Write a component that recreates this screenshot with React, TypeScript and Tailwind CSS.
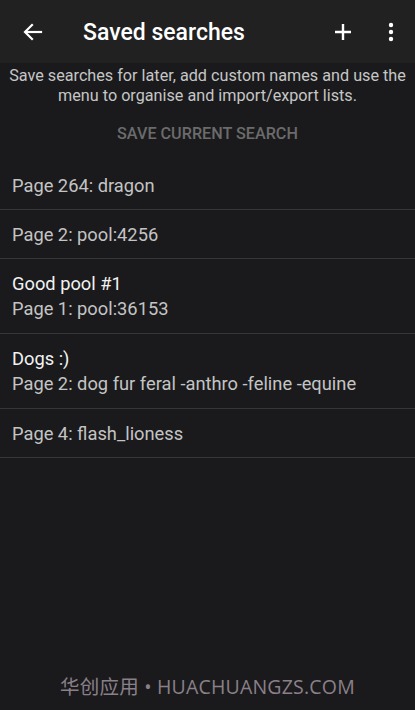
import React from "react";

type Search = {
  name?: string;
  query: string;
};

const searches: Search[] = [
  { query: "Page 264: dragon" },
  { query: "Page 2: pool:4256" },
  { name: "Good pool #1", query: "Page 1: pool:36153" },
  { name: "Dogs :)", query: "Page 2: dog fur feral -anthro -feline -equine" },
  { query: "Page 4: flash_lioness" },
];

const App: React.FC = () => {
  return (
    <div
      className="w-[415px] h-[710px] bg-[#1a1a1c] flex flex-col overflow-hidden"
      style={{ fontFamily: "Roboto, 'Noto Sans CJK SC', sans-serif" }}
    >
      {/* Toolbar */}
      <div className="h-[63px] bg-[#212121] flex items-center shrink-0">
        <button className="w-[66px] h-full flex items-center justify-center text-white">
          <svg width="24" height="24" viewBox="0 0 24 24" fill="none" stroke="currentColor" strokeWidth="2.2" strokeLinecap="square">
            <path d="M20 12H5" />
            <path d="M11 5l-7 7 7 7" />
          </svg>
        </button>
        <h1 className="flex-1 pl-[17px] pt-[3px] text-[23px] font-medium text-white">Saved searches</h1>
        <button className="w-[48px] h-full flex items-center justify-center text-white">
          <svg width="24" height="24" viewBox="0 0 24 24" fill="none" stroke="currentColor" strokeWidth="2.4">
            <path d="M12 4v16M4 12h16" />
          </svg>
        </button>
        <button className="w-[48px] h-full flex items-center justify-center text-white">
          <svg width="24" height="24" viewBox="0 0 24 24" fill="currentColor">
            <circle cx="12" cy="5" r="2.2" />
            <circle cx="12" cy="12" r="2.2" />
            <circle cx="12" cy="19" r="2.2" />
          </svg>
        </button>
      </div>

      {/* Intro */}
      <p className="px-1 pt-[3px] text-center text-[16.2px] leading-[20px] text-[#c6c6c6]">
        Save searches for later, add custom names and use the menu to organise and import/export lists.
      </p>
      <button className="h-[46px] mt-[5px] text-[16.2px] font-medium uppercase text-[#6b6b6b]">
        Save current search
      </button>

      {/* List */}
      <div className="mt-[4px]">
        {searches.map((s, i) => (
          <div
            key={i}
            className={`px-3 flex flex-col justify-center border-b border-[#363638] ${s.name ? "h-[75px]" : "h-[49px]"}`}
          >
            {s.name && <div className="text-[18.3px] leading-[25px] text-[#f2f2f2]">{s.name}</div>}
            <div className="text-[18.3px] leading-[25px] text-[#c4c4c4]">{s.query}</div>
          </div>
        ))}
      </div>

      <div className="flex-1" />
      <div className="h-[38px] text-center text-[19.5px] text-[#8b8089] tracking-[0.2px]" style={{ fontFamily: "'Open Sans', 'Noto Sans CJK SC', sans-serif" }}>
        华创应用 • HUACHUANGZS.COM
      </div>
    </div>
  );
};

export default App;
